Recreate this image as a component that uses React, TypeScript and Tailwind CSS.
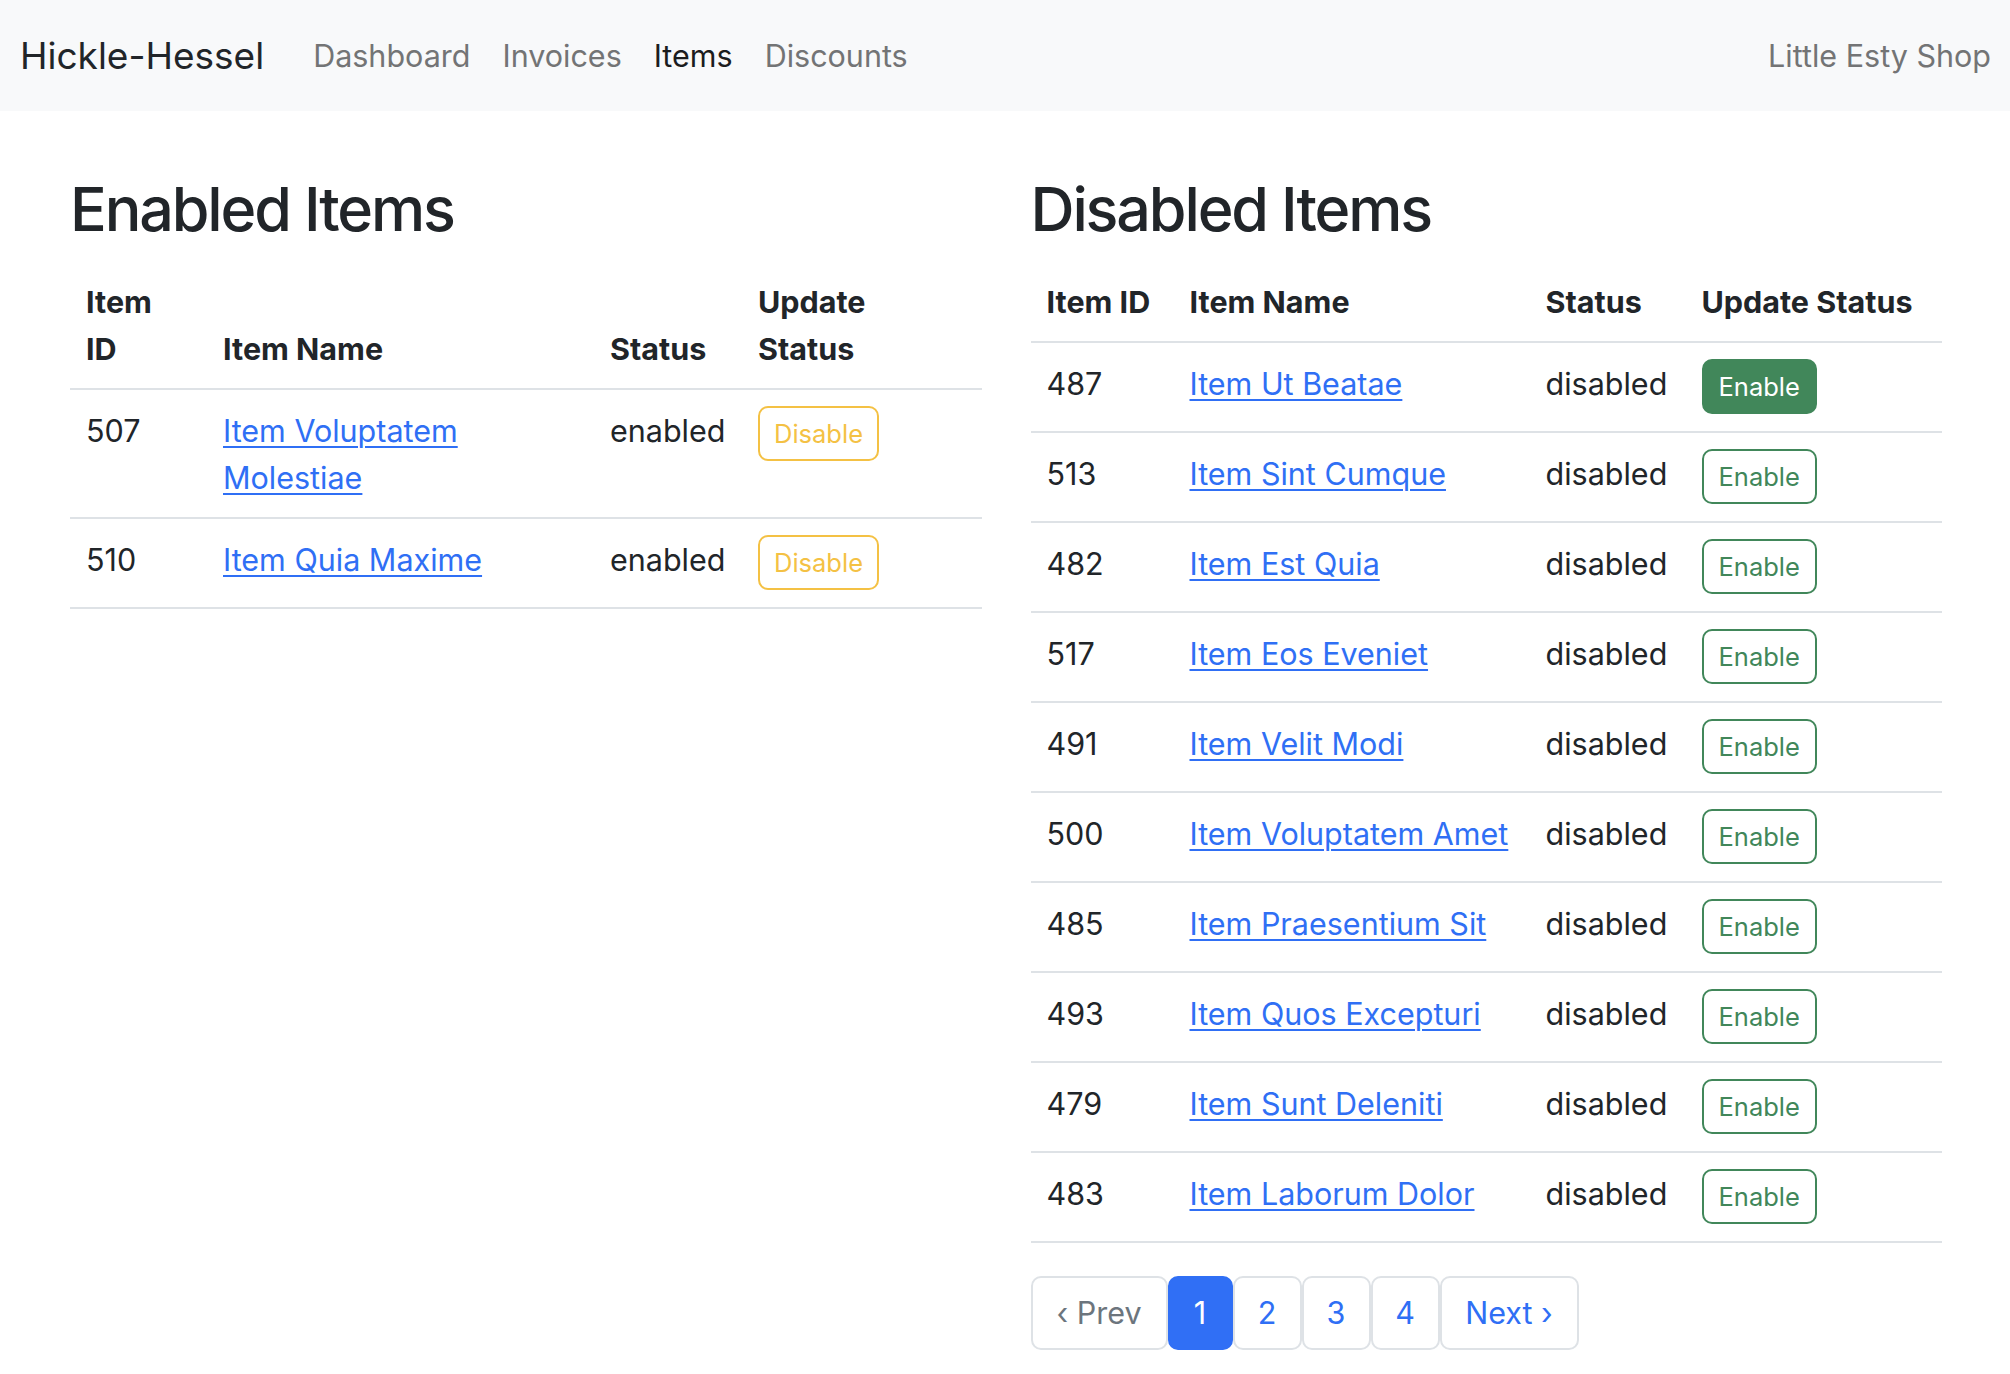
import React from 'react'

interface Item {
  id: number
  name: string
}

const enabledItems: Item[] = [
  { id: 507, name: 'Item Voluptatem Molestiae' },
  { id: 510, name: 'Item Quia Maxime' },
]

const disabledItems: Item[] = [
  { id: 487, name: 'Item Ut Beatae' },
  { id: 513, name: 'Item Sint Cumque' },
  { id: 482, name: 'Item Est Quia' },
  { id: 517, name: 'Item Eos Eveniet' },
  { id: 491, name: 'Item Velit Modi' },
  { id: 500, name: 'Item Voluptatem Amet' },
  { id: 485, name: 'Item Praesentium Sit' },
  { id: 493, name: 'Item Quos Excepturi' },
  { id: 479, name: 'Item Sunt Deleniti' },
  { id: 483, name: 'Item Laborum Dolor' },
]

const font = { fontFamily: 'Inter, "Noto Sans", sans-serif' }

function ItemLink({ name }: { name: string }) {
  if (name === 'Item Voluptatem Molestiae') {
    return (
      <a href="#" className="text-[#2f6ff5] underline decoration-2 underline-offset-[4px]">
        Item Voluptatem
        <br />
        Molestiae
      </a>
    )
  }
  return (
    <a href="#" className="text-[#2f6ff5] underline decoration-2 underline-offset-[4px]">
      {name}
    </a>
  )
}

function Navbar() {
  return (
    <nav className="flex h-[111px] items-center bg-[#f8f9fa] pl-[20px] pr-[19px]">
      <span className="mr-[33px] text-[37px] text-[#212529]">Hickle-Hessel</span>
      <a href="#" className="px-4 text-[30.5px] text-[#737475]">Dashboard</a>
      <a href="#" className="px-4 text-[30.5px] text-[#737475]">Invoices</a>
      <a href="#" className="px-4 text-[30.5px] text-[#1c1d1e]">Items</a>
      <a href="#" className="px-4 text-[30.5px] text-[#737475]">Discounts</a>
      <span className="ml-auto text-[30.5px] text-[#737475]">Little Esty Shop</span>
    </nav>
  )
}

function EnabledTable() {
  return (
    <table className="w-full table-fixed border-collapse text-left">
      <colgroup>
        <col className="w-[137px]" />
        <col className="w-[387px]" />
        <col className="w-[148px]" />
        <col />
      </colgroup>
      <thead>
        <tr className="border-b-2 border-[#dee2e6] align-bottom">
          <th className="px-4 pt-[17px] pb-4 font-bold">Item<br />ID</th>
          <th className="px-4 pt-[17px] pb-4 font-bold">Item Name</th>
          <th className="px-4 pt-[17px] pb-4 font-bold">Status</th>
          <th className="px-4 pt-[17px] pb-4 font-bold">Update<br />Status</th>
        </tr>
      </thead>
      <tbody className="align-top">
        {enabledItems.map((item) => (
          <tr key={item.id} className="border-b-2 border-[#dee2e6]">
            <td className="px-4 pt-[17px] pb-4">{item.id}</td>
            <td className="px-4 pt-[17px] pb-4"><ItemLink name={item.name} /></td>
            <td className="px-4 pt-[17px] pb-4">enabled</td>
            <td className="px-4 pt-[16px] pb-[17px]">
              <button className="h-[55px] rounded-[10px] border-2 border-[#f4c144] px-[14px] text-[25.5px] leading-none text-[#f4c144]">
                Disable
              </button>
            </td>
          </tr>
        ))}
      </tbody>
    </table>
  )
}

function DisabledTable() {
  return (
    <table className="w-full table-fixed border-collapse text-left">
      <colgroup>
        <col className="w-[143px]" />
        <col className="w-[356px]" />
        <col className="w-[156px]" />
        <col />
      </colgroup>
      <thead>
        <tr className="border-b-2 border-[#dee2e6] align-bottom">
          <th className="px-4 pt-[17px] pb-4 font-bold whitespace-nowrap">Item ID</th>
          <th className="px-4 pt-[17px] pb-4 font-bold">Item Name</th>
          <th className="px-4 pt-[17px] pb-4 font-bold">Status</th>
          <th className="px-4 pt-[17px] pb-4 font-bold whitespace-nowrap">Update Status</th>
        </tr>
      </thead>
      <tbody className="align-top">
        {disabledItems.map((item, i) => (
          <tr key={item.id} className="border-b-2 border-[#dee2e6]">
            <td className="px-4 pt-[17px] pb-4">{item.id}</td>
            <td className="px-4 pt-[17px] pb-4 whitespace-nowrap"><ItemLink name={item.name} /></td>
            <td className="px-4 pt-[17px] pb-4">disabled</td>
            <td className="px-4 pt-[16px] pb-[17px]">
              <button
                className={
                  i === 0
                    ? 'h-[55px] rounded-[10px] border-2 border-[#41875a] bg-[#41875a] px-[15px] text-[25.5px] leading-none text-white'
                    : 'h-[55px] rounded-[10px] border-2 border-[#41875a] px-[15px] text-[25.5px] leading-none text-[#41875a]'
                }
              >
                Enable
              </button>
            </td>
          </tr>
        ))}
      </tbody>
    </table>
  )
}

function Pagination() {
  const pages = [1, 2, 3, 4]
  return (
    <div className="mt-[33px] flex text-[30.5px] leading-[70px]">
      <span className="w-[137px] rounded-[10px] border-2 border-[#dee2e6] bg-white text-center text-[#6c757d]">
        ‹ Prev
      </span>
      {pages.map((p) =>
        p === 1 ? (
          <span key={p} className="w-[65px] rounded-[10px] border-2 border-[#306ff5] bg-[#306ff5] text-center text-white">
            {p}
          </span>
        ) : (
          <span key={p} className="w-[69px] rounded-[10px] border-2 border-[#dee2e6] text-center text-[#2f6ff5]">
            {p}
          </span>
        ),
      )}
      <span className="w-[139px] rounded-[10px] border-2 border-[#dee2e6] text-center text-[#2f6ff5]">
        Next ›
      </span>
    </div>
  )
}

export default function App() {
  return (
    <div className="min-h-screen bg-white text-[30.5px] leading-[47px] text-[#212529]" style={font}>
      <Navbar />
      <div className="grid grid-cols-2 gap-[49px] pt-[62px] pr-[68px] pl-[70px]">
        <section>
          <h1 className="mb-[15px] text-[61px] leading-[1.2] font-medium tracking-[-0.035em]">Enabled Items</h1>
          <EnabledTable />
        </section>
        <section>
          <h1 className="mb-[15px] text-[61px] leading-[1.2] font-medium tracking-[-0.035em]">Disabled Items</h1>
          <DisabledTable />
          <Pagination />
        </section>
      </div>
    </div>
  )
}
